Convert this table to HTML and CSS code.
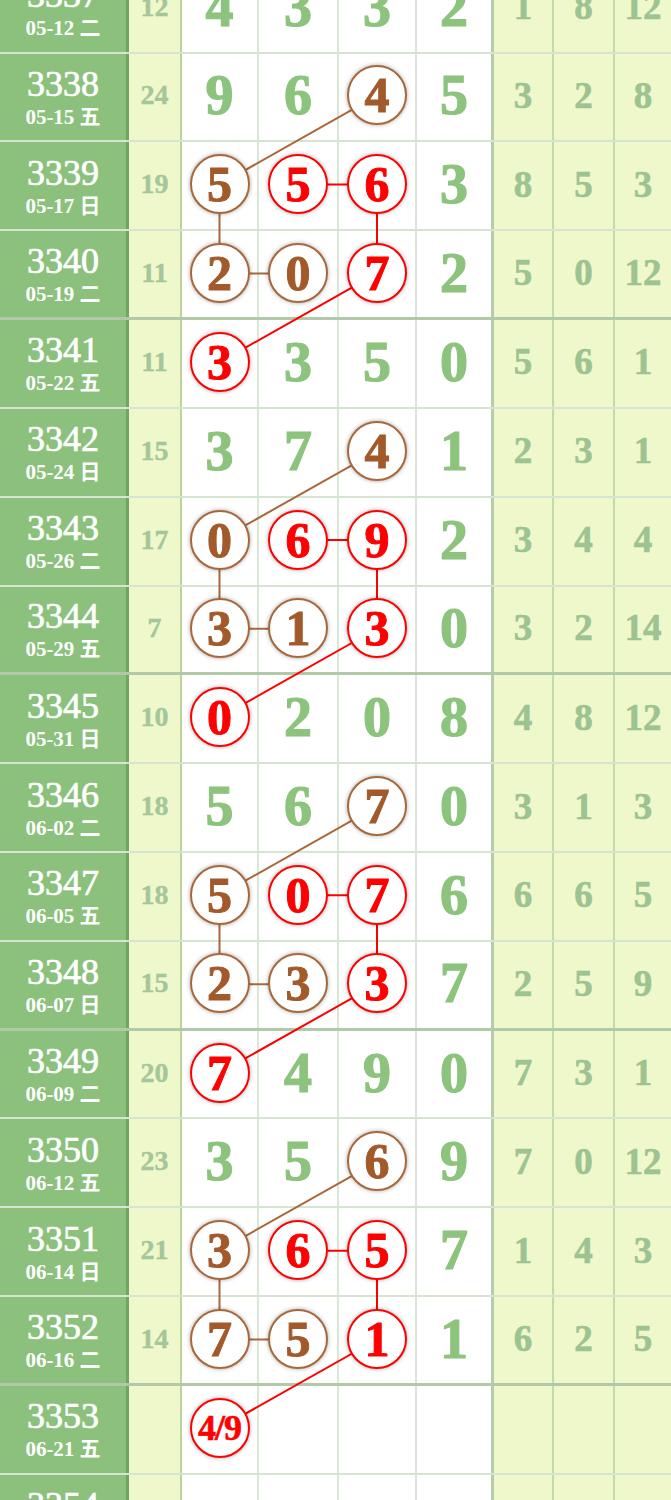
FILE: index.html
```html
<!DOCTYPE html>
<html lang="zh">
<head>
<meta charset="utf-8">
<title>走势图</title>
<link rel="stylesheet" href="styles.css">
</head>
<body>
<div class="table">
  <svg class="links" width="671" height="1600" viewBox="0 0 671 1600" aria-hidden="true">
    <g fill="none" stroke-width="2">
      <polyline class="ln-brown" points="377,130.74 219.5,219.58 219.5,308.42 298,308.42"/>
      <polyline class="ln-red" points="298,219.58 377,219.58 377,308.42 219.5,397.26"/>
      <polyline class="ln-brown" points="377,486.10 219.5,574.94 219.5,663.78 298,663.78"/>
      <polyline class="ln-red" points="298,574.94 377,574.94 377,663.78 219.5,752.62"/>
      <polyline class="ln-brown" points="377,841.46 219.5,930.30 219.5,1019.14 298,1019.14"/>
      <polyline class="ln-red" points="298,930.30 377,930.30 377,1019.14 219.5,1107.98"/>
      <polyline class="ln-brown" points="377,1196.82 219.5,1285.66 219.5,1374.50 298,1374.50"/>
      <polyline class="ln-red" points="298,1285.66 377,1285.66 377,1374.50 219.5,1463.34"/>
    </g>
  </svg>

  <div class="row">
    <div class="c-per"><span class="per">3337</span><span class="date">05-12 二</span></div>
    <div class="c-sum">12</div>
    <div class="c-d">4</div><div class="c-d">3</div><div class="c-d">3</div><div class="c-d last">2</div>
    <div class="c-y">1</div><div class="c-y">8</div><div class="c-y end">12</div>
  </div>
  <div class="row">
    <div class="c-per"><span class="per">3338</span><span class="date">05-15 五</span></div>
    <div class="c-sum">24</div>
    <div class="c-d">9</div><div class="c-d">6</div><div class="c-d"><span class="ball brown">4</span></div><div class="c-d last">5</div>
    <div class="c-y">3</div><div class="c-y">2</div><div class="c-y end">8</div>
  </div>
  <div class="row">
    <div class="c-per"><span class="per">3339</span><span class="date">05-17 日</span></div>
    <div class="c-sum">19</div>
    <div class="c-d"><span class="ball brown">5</span></div><div class="c-d"><span class="ball red">5</span></div><div class="c-d"><span class="ball red">6</span></div><div class="c-d last">3</div>
    <div class="c-y">8</div><div class="c-y">5</div><div class="c-y end">3</div>
  </div>
  <div class="row thick">
    <div class="c-per"><span class="per">3340</span><span class="date">05-19 二</span></div>
    <div class="c-sum">11</div>
    <div class="c-d"><span class="ball brown">2</span></div><div class="c-d"><span class="ball brown">0</span></div><div class="c-d"><span class="ball red">7</span></div><div class="c-d last">2</div>
    <div class="c-y">5</div><div class="c-y">0</div><div class="c-y end">12</div>
  </div>

  <div class="row">
    <div class="c-per"><span class="per">3341</span><span class="date">05-22 五</span></div>
    <div class="c-sum">11</div>
    <div class="c-d"><span class="ball red">3</span></div><div class="c-d">3</div><div class="c-d">5</div><div class="c-d last">0</div>
    <div class="c-y">5</div><div class="c-y">6</div><div class="c-y end">1</div>
  </div>
  <div class="row">
    <div class="c-per"><span class="per">3342</span><span class="date">05-24 日</span></div>
    <div class="c-sum">15</div>
    <div class="c-d">3</div><div class="c-d">7</div><div class="c-d"><span class="ball brown">4</span></div><div class="c-d last">1</div>
    <div class="c-y">2</div><div class="c-y">3</div><div class="c-y end">1</div>
  </div>
  <div class="row">
    <div class="c-per"><span class="per">3343</span><span class="date">05-26 二</span></div>
    <div class="c-sum">17</div>
    <div class="c-d"><span class="ball brown">0</span></div><div class="c-d"><span class="ball red">6</span></div><div class="c-d"><span class="ball red">9</span></div><div class="c-d last">2</div>
    <div class="c-y">3</div><div class="c-y">4</div><div class="c-y end">4</div>
  </div>
  <div class="row thick">
    <div class="c-per"><span class="per">3344</span><span class="date">05-29 五</span></div>
    <div class="c-sum">7</div>
    <div class="c-d"><span class="ball brown">3</span></div><div class="c-d"><span class="ball brown">1</span></div><div class="c-d"><span class="ball red">3</span></div><div class="c-d last">0</div>
    <div class="c-y">3</div><div class="c-y">2</div><div class="c-y end">14</div>
  </div>

  <div class="row">
    <div class="c-per"><span class="per">3345</span><span class="date">05-31 日</span></div>
    <div class="c-sum">10</div>
    <div class="c-d"><span class="ball red">0</span></div><div class="c-d">2</div><div class="c-d">0</div><div class="c-d last">8</div>
    <div class="c-y">4</div><div class="c-y">8</div><div class="c-y end">12</div>
  </div>
  <div class="row">
    <div class="c-per"><span class="per">3346</span><span class="date">06-02 二</span></div>
    <div class="c-sum">18</div>
    <div class="c-d">5</div><div class="c-d">6</div><div class="c-d"><span class="ball brown">7</span></div><div class="c-d last">0</div>
    <div class="c-y">3</div><div class="c-y">1</div><div class="c-y end">3</div>
  </div>
  <div class="row">
    <div class="c-per"><span class="per">3347</span><span class="date">06-05 五</span></div>
    <div class="c-sum">18</div>
    <div class="c-d"><span class="ball brown">5</span></div><div class="c-d"><span class="ball red">0</span></div><div class="c-d"><span class="ball red">7</span></div><div class="c-d last">6</div>
    <div class="c-y">6</div><div class="c-y">6</div><div class="c-y end">5</div>
  </div>
  <div class="row thick">
    <div class="c-per"><span class="per">3348</span><span class="date">06-07 日</span></div>
    <div class="c-sum">15</div>
    <div class="c-d"><span class="ball brown">2</span></div><div class="c-d"><span class="ball brown">3</span></div><div class="c-d"><span class="ball red">3</span></div><div class="c-d last">7</div>
    <div class="c-y">2</div><div class="c-y">5</div><div class="c-y end">9</div>
  </div>

  <div class="row">
    <div class="c-per"><span class="per">3349</span><span class="date">06-09 二</span></div>
    <div class="c-sum">20</div>
    <div class="c-d"><span class="ball red">7</span></div><div class="c-d">4</div><div class="c-d">9</div><div class="c-d last">0</div>
    <div class="c-y">7</div><div class="c-y">3</div><div class="c-y end">1</div>
  </div>
  <div class="row">
    <div class="c-per"><span class="per">3350</span><span class="date">06-12 五</span></div>
    <div class="c-sum">23</div>
    <div class="c-d">3</div><div class="c-d">5</div><div class="c-d"><span class="ball brown">6</span></div><div class="c-d last">9</div>
    <div class="c-y">7</div><div class="c-y">0</div><div class="c-y end">12</div>
  </div>
  <div class="row">
    <div class="c-per"><span class="per">3351</span><span class="date">06-14 日</span></div>
    <div class="c-sum">21</div>
    <div class="c-d"><span class="ball brown">3</span></div><div class="c-d"><span class="ball red">6</span></div><div class="c-d"><span class="ball red">5</span></div><div class="c-d last">7</div>
    <div class="c-y">1</div><div class="c-y">4</div><div class="c-y end">3</div>
  </div>
  <div class="row thick">
    <div class="c-per"><span class="per">3352</span><span class="date">06-16 二</span></div>
    <div class="c-sum">14</div>
    <div class="c-d"><span class="ball brown">7</span></div><div class="c-d"><span class="ball brown">5</span></div><div class="c-d"><span class="ball red">1</span></div><div class="c-d last">1</div>
    <div class="c-y">6</div><div class="c-y">2</div><div class="c-y end">5</div>
  </div>

  <div class="row">
    <div class="c-per"><span class="per">3353</span><span class="date">06-21 五</span></div>
    <div class="c-sum"></div>
    <div class="c-d"><span class="ball red small">4/9</span></div><div class="c-d"></div><div class="c-d"></div><div class="c-d last"></div>
    <div class="c-y"></div><div class="c-y"></div><div class="c-y end"></div>
  </div>
  <div class="row">
    <div class="c-per"><span class="per">3354</span><span class="date">06-23 日</span></div>
    <div class="c-sum"></div>
    <div class="c-d"></div><div class="c-d"></div><div class="c-d"></div><div class="c-d last"></div>
    <div class="c-y"></div><div class="c-y"></div><div class="c-y end"></div>
  </div>
</div>
</body>
</html>
```

FILE: styles.css
```css
html, body {
  margin: 0;
  padding: 0;
  background: #ffffff;
}

body {
  width: 671px;
  height: 1500px;
  overflow: hidden;
  font-family: "Liberation Serif", "Noto Sans CJK SC", serif;
}

.table {
  position: relative;
  margin-top: -35.3px;
  width: 671px;
}

.links {
  position: absolute;
  top: 0;
  left: 0;
  z-index: 1;
  pointer-events: none;
}

.ln-brown { stroke: #a8683c; }
.ln-red { stroke: #ff0000; }

.row {
  display: grid;
  grid-template-columns: 129px 53px 77px 80px 78px 77px 60px 61px 56px;
  height: 88.84px;
  box-sizing: border-box;
  border-bottom: 2px solid rgba(70, 130, 50, 0.22);
}

.row.thick {
  border-bottom: 3px solid rgba(60, 120, 40, 0.4);
}

.row > div {
  display: flex;
  align-items: center;
  justify-content: center;
  box-sizing: border-box;
  padding-bottom: 3px;
  border-right: 2px solid rgba(70, 130, 50, 0.2);
  line-height: 1;
}

.c-per {
  flex-direction: column;
  gap: 4px;
  background: #8bc17c;
  color: #ffffff;
  padding-bottom: 0 !important;
  border-right: 3px solid rgba(60, 110, 40, 0.32) !important;
}

.per {
  font-size: 36px;
  line-height: 36px;
  -webkit-text-stroke-width: 0.7px;
}

.date {
  font-size: 21px;
  line-height: 22px;
  font-weight: bold;
}

.c-sum {
  background: #eff8cb;
  color: #a5c69a;
  font-size: 28px;
  font-weight: bold;
  -webkit-text-stroke-width: 0.4px;
  border-right: 2px solid rgba(70, 130, 50, 0.3) !important;
}

.c-d {
  background: #ffffff;
  color: #8cc37d;
  font-size: 56px;
  font-weight: bold;
  -webkit-text-stroke-width: 1.2px;
}

.c-d.last {
  border-right: 3px solid rgba(60, 120, 40, 0.38) !important;
}

.c-y {
  background: #eff8cb;
  color: #9cc391;
  font-size: 37px;
  font-weight: bold;
  -webkit-text-stroke-width: 0.6px;
  border-right: 2px solid rgba(70, 130, 50, 0.25) !important;
}

.c-y.end {
  border-right: none !important;
}

.ball {
  position: relative;
  z-index: 2;
  width: 60px;
  height: 60px;
  box-sizing: border-box;
  border: 2.8px solid;
  border-radius: 50%;
  background: #ffffff;
  display: flex;
  align-items: center;
  justify-content: center;
  font-size: 50px;
  font-weight: bold;
  line-height: 1;
  -webkit-text-stroke-width: 1px;
  box-shadow: 0 0 4px rgba(0, 0, 0, 0.35);
}

.ball.brown {
  border-color: #a8683c;
  color: #a25a2a;
}

.ball.red {
  border-color: #ff0000;
  color: #ff0000;
}

.ball.small {
  font-size: 36px;
  letter-spacing: -1px;
  -webkit-text-stroke-width: 0.6px;
}
```
